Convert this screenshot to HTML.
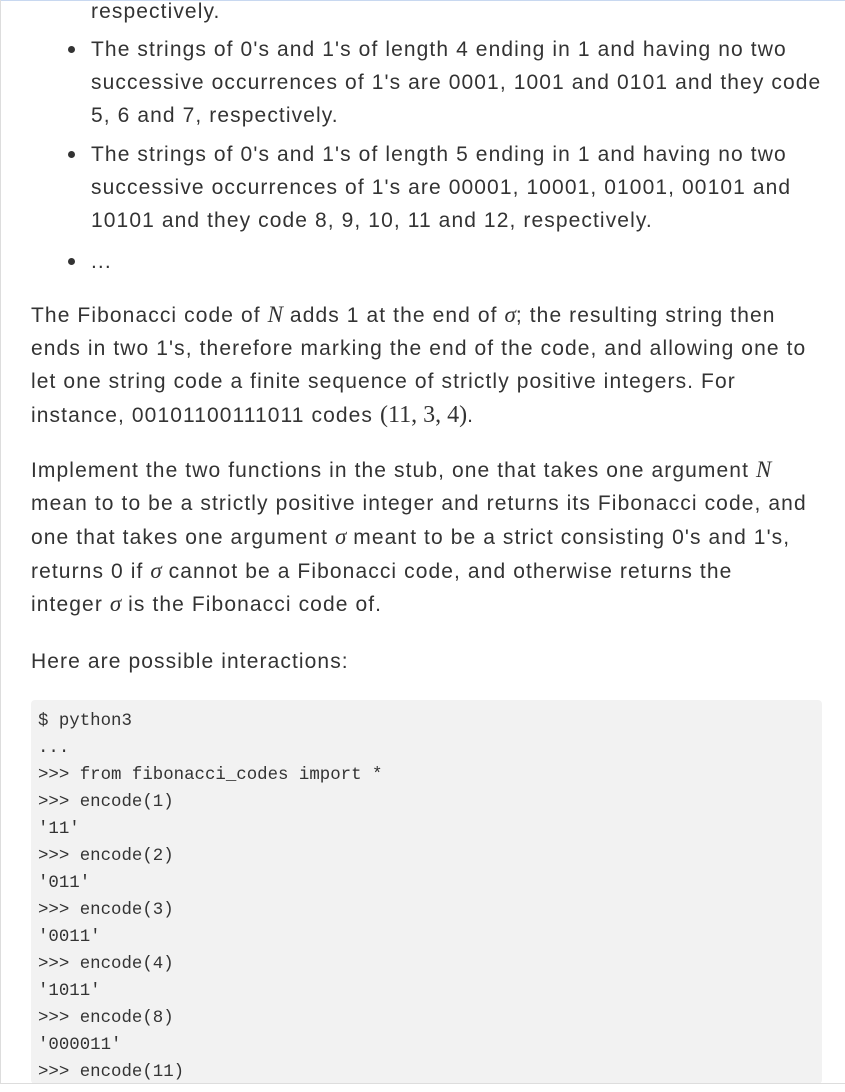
<!DOCTYPE html>
<html><head><meta charset="utf-8"><style>
html,body{margin:0;padding:0;background:#fff;width:845px;height:1092px;overflow:hidden}
body{position:relative;font-family:"Liberation Sans",sans-serif;color:#333;font-size:21px;letter-spacing:1.1px}
.l{position:absolute;white-space:nowrap;height:34px;line-height:34px}
.m{font-family:"Liberation Serif",serif;font-style:italic;font-size:23px;letter-spacing:0}
.r{font-family:"Liberation Serif",serif;font-size:24px;letter-spacing:0}
.dot{position:absolute;width:7px;height:7px;border-radius:50%;background:#333;left:68px}
.c{position:absolute;left:38px;font-family:"Liberation Mono","DejaVu Sans Mono",monospace;font-size:17.4px;letter-spacing:0;color:#333;white-space:pre;height:27px;line-height:27px}
</style></head><body>
<div style="position:absolute;left:0;top:0;width:845px;height:1px;background:#c8d8f0"></div>
<div style="position:absolute;left:0;top:0;width:1px;height:1084px;background:#ddd"></div>
<div style="position:absolute;left:31px;top:700px;width:791px;height:384px;background:#f2f2f2;border-radius:4px"></div>
<div style="position:absolute;left:0;top:1083px;width:845px;height:1px;background:#ddd"></div>

<div class="l" style="left:91px;top:-5px">respectively.</div>
<div class="dot" style="top:46px"></div>
<div class="l" style="left:91px;top:33px">The strings of 0's and 1's of length 4 ending in 1 and having no two</div>
<div class="l" style="left:91px;top:66px">successive occurrences of 1's are 0001, 1001 and 0101 and they code</div>
<div class="l" style="left:91px;top:99px">5, 6 and 7, respectively.</div>
<div class="dot" style="top:151px"></div>
<div class="l" style="left:91px;top:138px">The strings of 0's and 1's of length 5 ending in 1 and having no two</div>
<div class="l" style="left:91px;top:171px">successive occurrences of 1's are 00001, 10001, 01001, 00101 and</div>
<div class="l" style="left:91px;top:204px">10101 and they code 8, 9, 10, 11 and 12, respectively.</div>
<div class="dot" style="top:258px"></div>
<div class="l" style="left:91px;top:245px">...</div>

<div class="l" style="left:31px;top:298px">The Fibonacci code of <span class="m">N</span> adds 1 at the end of <span class="m">σ</span>; the resulting string then</div>
<div class="l" style="left:31px;top:332px">ends in two 1's, therefore marking the end of the code, and allowing one to</div>
<div class="l" style="left:31px;top:365px">let one string code a finite sequence of strictly positive integers. For</div>
<div class="l" style="left:31px;top:398px">instance, 00101100111011 codes <span class="r">(11, 3, 4)</span>.</div>

<div class="l" style="left:31px;top:453px">Implement the two functions in the stub, one that takes one argument <span class="m">N</span></div>
<div class="l" style="left:31px;top:487px">mean to to be a strictly positive integer and returns its Fibonacci code, and</div>
<div class="l" style="left:31px;top:520px">one that takes one argument <span class="m">σ</span> meant to be a strict consisting 0's and 1's,</div>
<div class="l" style="left:31px;top:554px">returns 0 if <span class="m">σ</span> cannot be a Fibonacci code, and otherwise returns the</div>
<div class="l" style="left:31px;top:587px">integer <span class="m">σ</span> is the Fibonacci code of.</div>

<div class="l" style="left:31px;top:645px">Here are possible interactions:</div>

<div class="c" style="top:708px">$ python3</div>
<div class="c" style="top:735px">...</div>
<div class="c" style="top:762px">&gt;&gt;&gt; from fibonacci_codes import *</div>
<div class="c" style="top:789px">&gt;&gt;&gt; encode(1)</div>
<div class="c" style="top:816px">'11'</div>
<div class="c" style="top:843px">&gt;&gt;&gt; encode(2)</div>
<div class="c" style="top:870px">'011'</div>
<div class="c" style="top:897px">&gt;&gt;&gt; encode(3)</div>
<div class="c" style="top:924px">'0011'</div>
<div class="c" style="top:951px">&gt;&gt;&gt; encode(4)</div>
<div class="c" style="top:978px">'1011'</div>
<div class="c" style="top:1005px">&gt;&gt;&gt; encode(8)</div>
<div class="c" style="top:1032px">'000011'</div>
<div class="c" style="top:1059px;height:24px;overflow:hidden">&gt;&gt;&gt; encode(11)</div>
</body></html>
